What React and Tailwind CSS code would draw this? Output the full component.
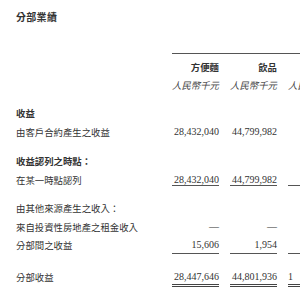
import React from "react";

const cjk = "font-['Noto_Sans_CJK_TC','Noto_Sans',sans-serif]";
const serif = "font-['Liberation_Serif',serif]";

const cols = "grid grid-cols-[145px_47px_47px_47px] gap-x-[11px] w-max";
const sub = "grid grid-cols-[47px_47px_47px] gap-x-[11px]";

function Row({ label, bold, values = [], mt, line }) {
  const cell =
    line === "single"
      ? "h-[13px] leading-[13px] border-b border-[#555]"
      : line === "sub"
      ? "h-[16px] leading-[14px] border-b border-[#555]"
      : line === "double"
      ? "h-[17px] leading-[14px] border-b-[3px] border-double border-[#444]"
      : "h-[14px] leading-[14px]";
  return (
    <div className={`${cols} ${mt}`}>
      <div
        className={`${cjk} text-[9.4px] leading-[14px] whitespace-nowrap text-[#333] ${bold ? "font-bold" : ""}`}
      >
        {label}
      </div>
      {[0, 1, 2].map((i) => (
        <div
          key={i}
          className={`${cell} ${serif} text-[10px] text-[#333] whitespace-nowrap ${
            values[i] === "1" ? "text-left" : "text-right"
          }`}
        >
          {values[i] || ""}
        </div>
      ))}
    </div>
  );
}

export default function App() {
  return (
    <div className="w-[300px] h-[300px] overflow-hidden bg-white pl-4">
      <div className={`${cjk} pt-[10px] text-[10px] leading-[14px] font-bold text-[#333] tracking-[0.3px]`}>
        分部業績
      </div>

      <div className={`${cols} mt-[29px]`}>
        <div />
        <div className={`col-span-3 border-t border-[#555] pt-[6px] ${sub}`}>
          <div className={`${cjk} text-[9.4px] leading-[14px] font-bold text-right text-[#333]`}>
            方便麵
          </div>
          <div className={`${cjk} text-[9.4px] leading-[14px] font-bold text-right text-[#333]`}>
            飲品
          </div>
          <div />
        </div>
      </div>

      <div className={`${cols} mt-[4px]`}>
        <div />
        {[0, 1, 2].map((i) => (
          <div
            key={i}
            className={`${cjk} text-[9.4px] leading-[14px] italic text-right text-[#444] whitespace-nowrap`}
          >
            人民幣千元
          </div>
        ))}
      </div>

      <Row label="收益" bold mt="mt-[14px]" />
      <Row label="由客戶合約產生之收益" values={["28,432,040", "44,799,982"]} mt="mt-[5px]" />
      <Row label="收益認列之時點：" bold mt="mt-[15px]" />
      <Row
        label="在某一時點認列"
        values={["28,432,040", "44,799,982"]}
        mt="mt-[5px]"
        line="single"
      />
      <Row label="由其他來源產生之收入：" mt="mt-[14px]" />
      <Row label="來自投資性房地產之租金收入" values={["—", "—"]} mt="mt-[5px]" />
      <Row label="分部間之收益" values={["15,606", "1,954"]} mt="mt-[4px]" line="sub" />
      <Row
        label="分部收益"
        values={["28,447,646", "44,801,936", "1"]}
        mt="mt-[16px]"
        line="double"
      />
    </div>
  );
}
